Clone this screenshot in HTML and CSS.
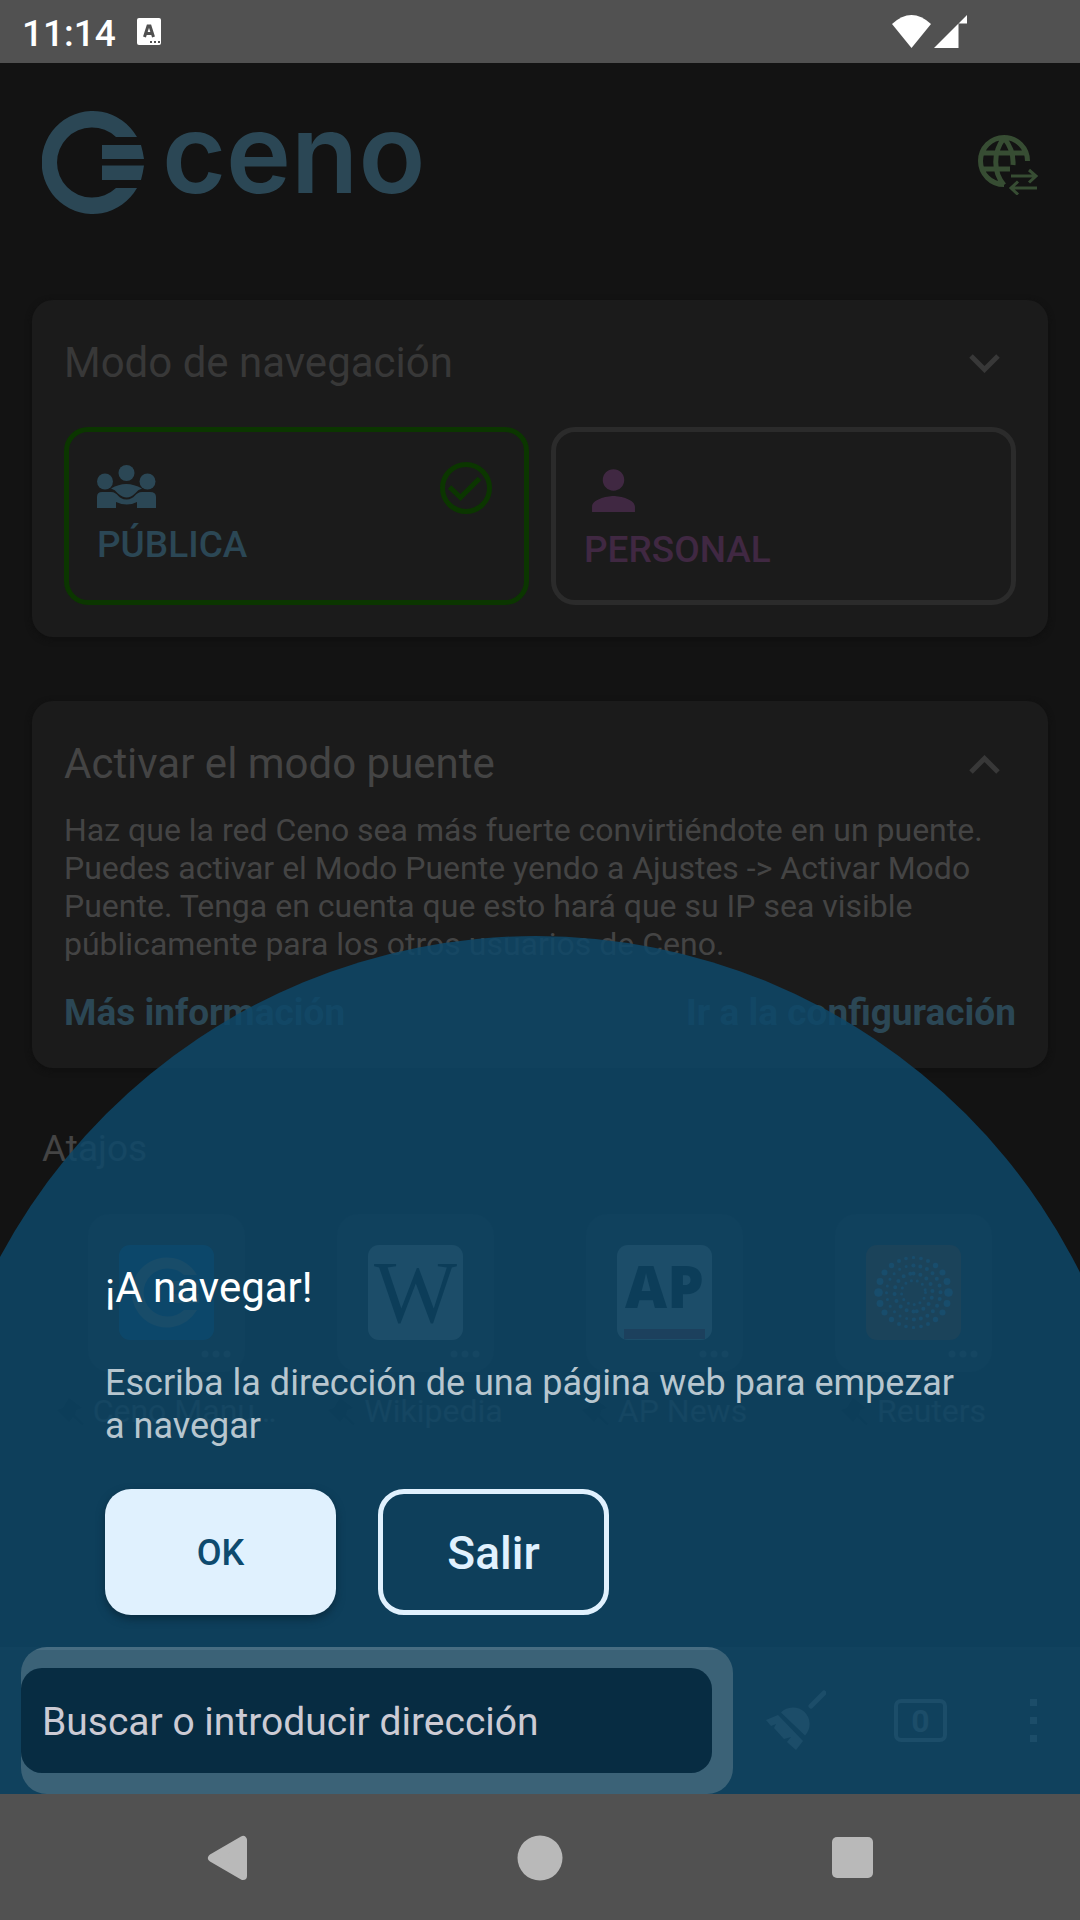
FILE: index.html
```html
<!DOCTYPE html>
<html lang="es">
<head>
<meta charset="utf-8">
<meta name="viewport" content="width=device-width, initial-scale=1">
<title>Ceno</title>
<link rel="stylesheet" href="styles.css">
</head>
<body>
<div class="status">
  <span class="status-time">11:14</span>
  <svg class="status-note" width="24" height="27" viewBox="0 0 24 27"><rect width="24" height="27" rx="2" fill="#fff"/><path d="M7.500 19L11 8h2l3.500 11M9 15.500h6" fill="none" stroke="#505050" stroke-width="3"/><path d="M13 24h2m2 0h2m2 0h2" stroke="#505050" stroke-width="2"/></svg>
  <div class="status-signal">
    <svg width="39" height="33" viewBox="0 0 39 33"><path d="M0 9Q19.500-9 39 9L19.500 33z" fill="#fff"/></svg>
    <svg width="33" height="33" viewBox="0 0 33 33"><path d="M0 33L24.500 8.500V33zM24.500 8.500L33 0v8.500z" fill="#fff"/></svg>
  </div>
</div>

<div class="stage">
  <header class="top">
    <div class="brand">
      <svg width="102" height="103" viewBox="0 0 102 103" fill="currentColor"><path d="M95 26A51 51.500 0 1 0 95 77H74A35 35 0 1 1 74 26zM60 34h39q2 7 3 14H60zM60 54.500h42q-1 7-3 14.500H60z"/></svg>
      <span class="brand-name">ceno</span>
    </div>
    <button class="icon-btn sources" aria-label="Fuentes">
      <svg width="60" height="60" viewBox="0 0 60 60" fill="none" stroke="currentColor"><path d="M49.500 26A23.500 23.500 0 1 0 26 49.500M26 3C15 17 15 37 26 50M26 3q10 12 9 27M4 18h44M4 34h28" stroke-width="5"/><path d="M33 41h25M51 35l7 6-7 6.500M59 53H34M40 46.500L33 53l7 6.500" stroke-width="3"/></svg>
    </button>
  </header>

  <main class="home">
    <section class="card">
      <div class="card-head">
        <h2>Modo de navegación</h2>
        <button class="icon-btn" aria-label="Contraer"><svg width="31" height="19" viewBox="0 0 31 19" fill="none" stroke="currentColor" stroke-width="5"><path d="M2 2l13.500 13.500L29 2"/></svg></button>
      </div>
      <div class="modes">
        <button class="mode mode-public" aria-pressed="true">
          <span class="mode-main">
            <svg width="59" height="43" viewBox="0 0 59 43" fill="currentColor"><circle cx="8" cy="16.500" r="8"/><circle cx="29.500" cy="8" r="8"/><circle cx="50.500" cy="16.500" r="8"/><path d="M14 23.500q15-9 31 0-4 1-7 5-8 8-17 0-3-4-7-5z"/><path d="M0 43V32q0-5 5-5h9c7 0 7 7.500 15.500 7.500S38 27 45 27h8q6 0 6 5v11H40v-6q-10 5-21 0v6z"/></svg>
            <span>PÚBLICA</span>
          </span>
          <svg class="mode-check" width="52" height="52" viewBox="0 0 52 52" fill="none" stroke="currentColor" stroke-width="5"><circle cx="26" cy="26" r="23.500"/><path d="M9.500 25l11 10.500 19-19"/></svg>
        </button>
        <button class="mode mode-personal" aria-pressed="false">
          <span class="mode-main">
            <svg width="59" height="53" viewBox="1 0.6 22 19.700" fill="currentColor"><path d="M12 12a4 4 0 1 0 0-8 4 4 0 0 0 0 8zm0 2c-2.670 0-8 1.340-8 4v2h16v-2c0-2.660-5.330-4-8-4z"/></svg>
            <span>PERSONAL</span>
          </span>
        </button>
      </div>
    </section>

    <section class="card">
      <div class="card-head card-head-open">
        <h2>Activar el modo puente</h2>
        <button class="icon-btn" aria-label="Expandir"><svg width="31" height="19" viewBox="0 0 31 19" fill="none" stroke="currentColor" stroke-width="5"><path d="M2 17L15.500 3.500 29 17"/></svg></button>
      </div>
      <p class="card-text">Haz que la red Ceno sea más fuerte convirtiéndote en un puente. Puedes activar el Modo Puente yendo a Ajustes -&gt; Activar Modo Puente. Tenga en cuenta que esto hará que su IP sea visible públicamente para los otros usuarios de Ceno.</p>
      <div class="card-links">
        <a href="#info">Más información</a>
        <a href="#config">Ir a la configuración</a>
      </div>
    </section>

    <section class="shortcuts">
      <h3>Atajos</h3>
      <ul>
        <li><a href="#manual">
          <span class="tile">
            <svg width="95" height="95" viewBox="0 0 95 95"><rect width="95" height="95" rx="11" fill="#004874"/><path d="M78 30A35 35 0 1 0 78 65H65A24 24 0 1 1 65 30zM54 36h26v9H54zM54 49h26v9H54z" fill="#6a6a6a" fill-opacity=".8"/></svg>
            <svg class="dots" width="30" height="8" viewBox="0 0 30 8"><circle cx="4" cy="4" r="3.500"/><circle cx="15" cy="4" r="3.500"/><circle cx="26" cy="4" r="3.500"/></svg>
          </span>
          <span class="label"><svg class="pin" width="27" height="27" viewBox="0 0 27 27"><path d="M12 0l13 10-6 2-1 5 9 9-2 1-9-8-4 5L0 12l6-2z"/></svg>Ceno Manu…</span>
        </a></li>
        <li><a href="#wikipedia">
          <span class="tile">
            <svg width="95" height="95" viewBox="0 0 95 95"><rect width="95" height="95" rx="11" fill="#6a6a6a"/><text class="glyph-w" x="47.500" y="77" text-anchor="middle">W</text></svg>
            <svg class="dots" width="30" height="8" viewBox="0 0 30 8"><circle cx="4" cy="4" r="3.500"/><circle cx="15" cy="4" r="3.500"/><circle cx="26" cy="4" r="3.500"/></svg>
          </span>
          <span class="label"><svg class="pin" width="27" height="27" viewBox="0 0 27 27"><path d="M12 0l13 10-6 2-1 5 9 9-2 1-9-8-4 5L0 12l6-2z"/></svg>Wikipedia</span>
        </a></li>
        <li><a href="#apnews">
          <span class="tile">
            <svg width="95" height="95" viewBox="0 0 95 95"><rect width="95" height="95" rx="11" fill="#6a6a6a"/><text class="glyph-ap" x="47.500" y="63" text-anchor="middle">AP</text><path d="M7 84h81v10H7z" fill="#6a1420"/></svg>
            <svg class="dots" width="30" height="8" viewBox="0 0 30 8"><circle cx="4" cy="4" r="3.500"/><circle cx="15" cy="4" r="3.500"/><circle cx="26" cy="4" r="3.500"/></svg>
          </span>
          <span class="label"><svg class="pin" width="27" height="27" viewBox="0 0 27 27"><path d="M12 0l13 10-6 2-1 5 9 9-2 1-9-8-4 5L0 12l6-2z"/></svg>AP News</span>
        </a></li>
        <li><a href="#reuters">
          <span class="tile">
            <svg width="95" height="95" viewBox="0 0 95 95">
              <rect width="95" height="95" rx="11" fill="#65280a"/>
              <defs><g id="quarter"><circle cx="0" cy="-35" r="1.500"/><circle cx="7.500" cy="-34" r="1.800"/><circle cx="14.500" cy="-31.500" r="2"/><circle cx="22" cy="-27" r="2.700"/><circle cx="29" cy="-20" r="3"/><circle cx="33.500" cy="-11" r="3.400"/><circle cx="35" cy="0" r="4"/></g></defs>
              <g transform="translate(47.500 47.500)" fill="#506a80">
                <use href="#quarter"/><use href="#quarter" transform="scale(-1 1)"/><use href="#quarter" transform="scale(1 -1)"/><use href="#quarter" transform="scale(-1 -1)"/>
                <g fill="none" stroke="#506a80" stroke-linecap="round">
                  <path d="M0-27A27 27 0 0 1 0 27" stroke-width="4" stroke-dasharray="0 7"/><path d="M0 27A27 27 0 0 1 0-27" stroke-width="3" stroke-dasharray="0 7"/>
                  <path d="M0-19A19 19 0 0 1 0 19" stroke-width="4" stroke-dasharray="0 7"/><path d="M0 19A19 19 0 0 1 0-19" stroke-width="4" stroke-dasharray="0 7"/>
                  <circle r="12" stroke-width="3" stroke-dasharray="0 6"/>
                </g>
              </g>
            </svg>
            <svg class="dots" width="30" height="8" viewBox="0 0 30 8"><circle cx="4" cy="4" r="3.500"/><circle cx="15" cy="4" r="3.500"/><circle cx="26" cy="4" r="3.500"/></svg>
          </span>
          <span class="label"><svg class="pin" width="27" height="27" viewBox="0 0 27 27"><path d="M12 0l13 10-6 2-1 5 9 9-2 1-9-8-4 5L0 12l6-2z"/></svg>Reuters</span>
        </a></li>
      </ul>
    </section>
  </main>

  <div class="toolbar">
    <div class="search"><input type="text" aria-label="Dirección" placeholder="Buscar o introducir dirección"></div>
    <button class="icon-btn tool" aria-label="Limpiar">
      <svg width="60" height="60" viewBox="0 0 60 60" fill="currentColor"><path d="M45 16L58 3" stroke="currentColor" stroke-width="5" stroke-linecap="round"/><path d="M15 22.500a16.500 16.500 0 0 1 24 23zM0 30l12-5 25 26-7 9-9-8 4-5-7 2L8 38l2-4-5 2z"/></svg>
    </button>
    <button class="icon-btn tool" aria-label="Pestañas"><span class="tabs">0</span></button>
    <button class="icon-btn tool tool-menu" aria-label="Menú">
      <svg width="7" height="43" viewBox="0 0 7 43" fill="currentColor"><path d="M0 0h7v7H0zM0 18h7v7H0zM0 36h7v7H0z"/></svg>
    </button>
  </div>

  <div class="overlay">
    <div class="disc"></div>
    <div class="tip" role="dialog" aria-labelledby="tip-title">
      <h1 id="tip-title">¡A navegar!</h1>
      <p>Escriba la dirección de una página web para empezar a navegar</p>
      <div class="tip-actions">
        <button class="btn btn-ok">OK</button>
        <button class="btn btn-exit">Salir</button>
      </div>
    </div>
  </div>
</div>

<nav class="nav">
  <button class="icon-btn" aria-label="Atrás"><svg width="42" height="46" viewBox="0 0 42 46"><path d="M5 23L36 5v36z" fill="#b9b9b9" stroke="#b9b9b9" stroke-width="8" stroke-linejoin="round"/></svg></button>
  <button class="icon-btn" aria-label="Inicio"><svg width="46" height="46" viewBox="0 0 46 46"><circle cx="23" cy="23" r="22.500" fill="#b9b9b9"/></svg></button>
  <button class="icon-btn" aria-label="Recientes"><svg width="41" height="41" viewBox="0 0 41 41"><rect width="41" height="41" rx="5" fill="#b9b9b9"/></svg></button>
</nav>
</body>
</html>
```

FILE: styles.css
```css
* { box-sizing: border-box; }

body {
  margin: 0;
  min-height: 100vh;
  display: flex;
  flex-direction: column;
  background: #131313;
  color: #404040;
  font-family: Roboto, "Noto Sans", sans-serif;
}

h1, h2, h3, p, ul { margin: 0; padding: 0; font-weight: 400; }
svg { display: block; flex: none; }
a { color: inherit; text-decoration: none; }
button { font-family: inherit; padding: 0; background: none; border: 0; color: inherit; }
.icon-btn { display: flex; align-items: center; justify-content: center; }

/* System status bar */
.status {
  display: flex;
  align-items: center;
  height: 63px;
  padding: 0 113px 0 22px;
  background: #515151;
  color: #fff;
}
.status-time { font-size: 37px; line-height: 44px; font-weight: 500; padding-top: 4px; }
.status-note { margin-left: 21px; }
.status-signal { display: flex; gap: 3px; margin-left: auto; }

.stage {
  position: relative;
  flex: 1;
  display: flex;
  flex-direction: column;
}

/* Header */
.top {
  display: flex;
  align-items: center;
  justify-content: space-between;
  height: 199px;
  padding: 0 42px;
}
.brand { display: flex; align-items: center; gap: 18px; color: #2b4755; }
.brand-name { font: 600 110px/100px Inter, sans-serif; padding-bottom: 20px; }
.sources { padding-top: 4px; color: #374d33; }

/* Cards */
.home { flex: 1; padding: 38px 32px 0; }
.card {
  padding: 39px 32px 32px;
  margin-bottom: 64px;
  border-radius: 21px;
  background: #1b1b1b;
  box-shadow: 0 2px 6px #0f0f0f;
}
.card-head {
  display: flex;
  align-items: center;
  justify-content: space-between;
  padding-right: 16px;
  margin-bottom: 40px;
  color: #383838;
}
.card-head-open { margin-bottom: 23px; }
.card-head-open h2 { color: #444; }
h2 { font-size: 42px; line-height: 48px; }
.card-text { font-size: 32px; line-height: 38px; color: #444; }
.card-links {
  display: flex;
  justify-content: space-between;
  margin-top: 27px;
  font-size: 37px;
  line-height: 46px;
  font-weight: 700;
  color: #2b4755;
}

.modes { display: grid; grid-template-columns: 1fr 1fr; gap: 22px; }
.mode {
  display: flex;
  align-items: center;
  justify-content: space-between;
  height: 178px;
  padding: 0 32px 0 28px;
  border: 5px solid #2b2b2b;
  border-radius: 24px;
  font-size: 37px;
  line-height: 44px;
  font-weight: 500;
  text-align: left;
}
.mode-main { display: flex; flex-direction: column; gap: 15px; }
.mode-public { border-color: #0b3600; color: #2b4755; }
.mode-personal { color: #402842; }
.mode-check { align-self: flex-start; margin-top: 30px; color: #0b3600; }

/* Shortcuts */
.shortcuts { padding: 0 10px; }
.card + .shortcuts { margin-top: -5px; }
h3 { font-size: 37px; line-height: 44px; color: #444; }
.shortcuts ul {
  display: grid;
  grid-template-columns: repeat(4, 1fr);
  margin-top: 43px;
  list-style: none;
}
.shortcuts a { display: flex; flex-direction: column; align-items: center; gap: 20px; }
.tile {
  display: flex;
  flex-direction: column;
  width: 157px;
  height: 158px;
  padding: 31px 14px 0 31px;
  gap: 10px;
  border-radius: 21px;
  background: #1b1b1b;
  box-shadow: 0 2px 6px #0f0f0f;
}
.dots { align-self: flex-end; fill: #3c3c3c; }
.label { display: flex; align-items: center; gap: 9px; font-size: 32px; line-height: 38px; color: #3c3c3c; }
.pin { fill: #000; }
.glyph-w { font: 88px "Liberation Serif", serif; fill: #000; }
.glyph-ap { font: 800 58px "Open Sans", sans-serif; fill: #000; }

/* Address toolbar */
.toolbar {
  display: flex;
  height: 147px;
  padding-left: 21px;
  background: #1b1b1b;
  border-top: 3px solid #252525;
}
.search {
  position: relative;
  z-index: 2;
  flex: 1;
  margin-top: -3px;
  padding: 21px 21px 21px 0;
  border-radius: 26px;
  background: linear-gradient(#486d82 3px, #3b6277 3px);
}
.search input {
  width: 100%;
  height: 105px;
  padding: 3px 21px 0;
  border: 0;
  border-radius: 21px;
  background: #072c42;
  font: 39px Roboto, sans-serif;
}
.search input::placeholder { color: #cccbd4; opacity: 1; }
.tool { width: 125px; padding-bottom: 4px; color: #6a6a6a; }
.tool-menu { width: 97px; padding-left: 3px; }
.tabs {
  width: 53px;
  height: 43px;
  border: 4px solid;
  border-radius: 7px;
  font-size: 32px;
  line-height: 36px;
  font-weight: 700;
}

/* Onboarding overlay */
.overlay {
  position: absolute;
  inset: 0;
  z-index: 1;
  overflow: hidden;
  display: flex;
  flex-direction: column;
  justify-content: flex-end;
}
.disc {
  position: absolute;
  bottom: -358px;
  left: calc(50% - 612px);
  width: 1216px;
  height: 1216px;
  border-radius: 50%;
  background: rgba(14, 72, 105, .85);
}
.tip { position: relative; padding: 0 105px 179px; color: #fff; }
h1 { font-size: 42px; line-height: 48px; }
.tip p { margin: 50px 0 41px; font-size: 36px; line-height: 43px; color: #b7c6cf; }
.tip-actions { display: flex; gap: 42px; }
.btn {
  width: 231px;
  height: 126px;
  padding-top: 2px;
  border-radius: 26px;
  font-weight: 500;
}
.btn-ok { background: #e0f1fe; color: #0d4a6e; font-size: 36px; box-shadow: 0 4px 8px #0a2c40; }
.btn-exit { border: 5px solid #e0f1fe; color: #e0f1fe; font-size: 46px; }

/* System navigation */
.nav { display: flex; justify-content: center; height: 126px; background: #515151; }
.nav .icon-btn { width: 312px; padding-top: 1px; }
```
